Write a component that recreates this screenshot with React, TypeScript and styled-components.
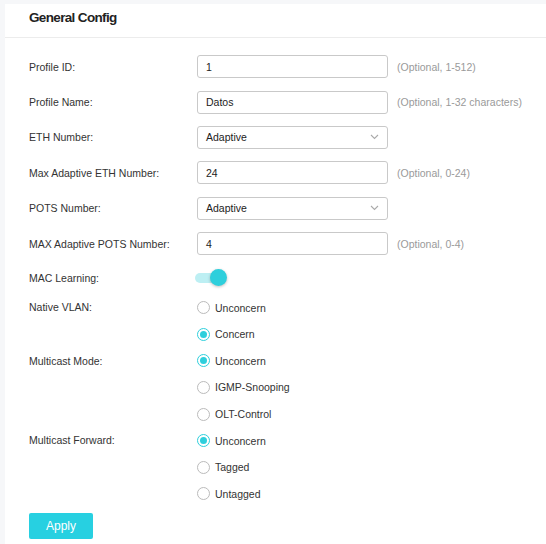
import React, { useState } from 'react';
import styled, { createGlobalStyle } from 'styled-components';

const GlobalStyle = createGlobalStyle`
  html, body {
    margin: 0;
    padding: 0;
    background: #f6f7f9;
    font-family: "Liberation Sans", Arial, sans-serif;
  }
`;

const Page = styled.div`
  padding: 4px 0 0 5px;
  height: 544px;
  box-sizing: border-box;
  overflow: hidden;
`;

const Card = styled.div`
  background: #fff;
  min-height: 540px;
`;

const Header = styled.div`
  height: 34px;
  box-sizing: border-box;
  display: flex;
  align-items: center;
  padding: 0 0 7px 24px;
  border-bottom: 1px solid #ececec;
  font-size: 13.5px;
  font-weight: bold;
  color: #222;
  letter-spacing: -0.65px;
`;

const Form = styled.div`
  padding: 11px 0 0 24px;
`;

const Row = styled.div<{ h?: number }>`
  display: grid;
  grid-template-columns: 168px 191px auto;
  align-items: center;
  height: ${({ h }) => h ?? 35.4}px;
`;

const GroupRow = styled.div`
  display: grid;
  grid-template-columns: 168px auto;
  align-items: start;
`;

const Label = styled.div`
  font-size: 10.5px;
  color: #333;
`;

const GroupLabel = styled(Label)`
  line-height: 26px;
`;

const Field = styled.div`
  position: relative;
  height: 23px;
  border: 1px solid #c9c9c9;
  border-radius: 3px;
  box-sizing: border-box;
  display: flex;
  align-items: center;
  padding-left: 8px;
  font-size: 10.5px;
  color: #222;
`;

const Chevron = styled.svg`
  position: absolute;
  right: 8px;
  top: 7px;
`;

const Hint = styled.div`
  font-size: 10.5px;
  color: #9a9a9a;
  padding-left: 9px;
`;

const Track = styled.div<{ on: boolean }>`
  position: relative;
  width: 26px;
  height: 10px;
  margin-left: -2px;
  border-radius: 5px;
  background: ${({ on }) => (on ? '#bdeff3' : '#e0e0e0')};
  cursor: pointer;
`;

const Knob = styled.div<{ on: boolean }>`
  position: absolute;
  top: -4px;
  left: ${({ on }) => (on ? 15 : -2)}px;
  width: 17px;
  height: 17px;
  border-radius: 50%;
  background: #2ecfdc;
  box-shadow: 0 1px 3px rgba(0, 0, 0, 0.25);
`;

const Options = styled.div`
  display: flex;
  flex-direction: column;
`;

const Option = styled.label`
  height: 26.6px;
  display: flex;
  align-items: center;
  gap: 5px;
  font-size: 10.5px;
  color: #333;
  cursor: pointer;
`;

const Dot = styled.span<{ checked: boolean }>`
  width: 13px;
  height: 13px;
  box-sizing: border-box;
  border-radius: 50%;
  border: 1px solid ${({ checked }) => (checked ? '#2ecfdc' : '#bbb')};
  display: flex;
  align-items: center;
  justify-content: center;
  &::after {
    content: '';
    width: 7px;
    height: 7px;
    border-radius: 50%;
    background: ${({ checked }) => (checked ? '#2ecfdc' : 'transparent')};
  }
`;

const ApplyButton = styled.button`
  margin-top: 6px;
  width: 64px;
  height: 26px;
  border: none;
  border-radius: 2px;
  background: #27d0e1;
  color: #fff;
  font-family: "Liberation Sans", Arial, sans-serif;
  font-size: 12px;
  cursor: pointer;
`;

const inputs = [
  { label: 'Profile ID:', value: '1', hint: '(Optional, 1-512)' },
  { label: 'Profile Name:', value: 'Datos', hint: '(Optional, 1-32 characters)' },
  { label: 'ETH Number:', value: 'Adaptive', select: true },
  { label: 'Max Adaptive ETH Number:', value: '24', hint: '(Optional, 0-24)' },
  { label: 'POTS Number:', value: 'Adaptive', select: true },
  { label: 'MAX Adaptive POTS Number:', value: '4', hint: '(Optional, 0-4)' },
];

const groups = [
  { label: 'Native VLAN:', options: ['Unconcern', 'Concern'], initial: 1 },
  { label: 'Multicast Mode:', options: ['Unconcern', 'IGMP-Snooping', 'OLT-Control'], initial: 0 },
  { label: 'Multicast Forward:', options: ['Unconcern', 'Tagged', 'Untagged'], initial: 0 },
];

function RadioGroup({ label, options, initial }: { label: string; options: string[]; initial: number }) {
  const [picked, setPicked] = useState(initial);
  return (
    <GroupRow>
      <GroupLabel>{label}</GroupLabel>
      <Options>
        {options.map((o, i) => (
          <Option key={o} onClick={() => setPicked(i)}>
            <Dot checked={picked === i} />
            {o}
          </Option>
        ))}
      </Options>
    </GroupRow>
  );
}

export default function App() {
  const [macLearning, setMacLearning] = useState(true);
  return (
    <Page>
      <GlobalStyle />
      <Card>
        <Header>General Config</Header>
        <Form>
          {inputs.map((f) => (
            <Row key={f.label}>
              <Label>{f.label}</Label>
              <Field>
                {f.value}
                {f.select && (
                  <Chevron width="9" height="6" viewBox="0 0 9 6">
                    <path d="M1 1l3.5 3.5L8 1" fill="none" stroke="#aaa" strokeWidth="1.1" />
                  </Chevron>
                )}
              </Field>
              {f.hint && <Hint>{f.hint}</Hint>}
            </Row>
          ))}
          <Row h={33}>
            <Label>MAC Learning:</Label>
            <Track on={macLearning} onClick={() => setMacLearning(!macLearning)}>
              <Knob on={macLearning} />
            </Track>
          </Row>
          {groups.map((g) => (
            <RadioGroup key={g.label} {...g} />
          ))}
          <ApplyButton>Apply</ApplyButton>
        </Form>
      </Card>
    </Page>
  );
}
